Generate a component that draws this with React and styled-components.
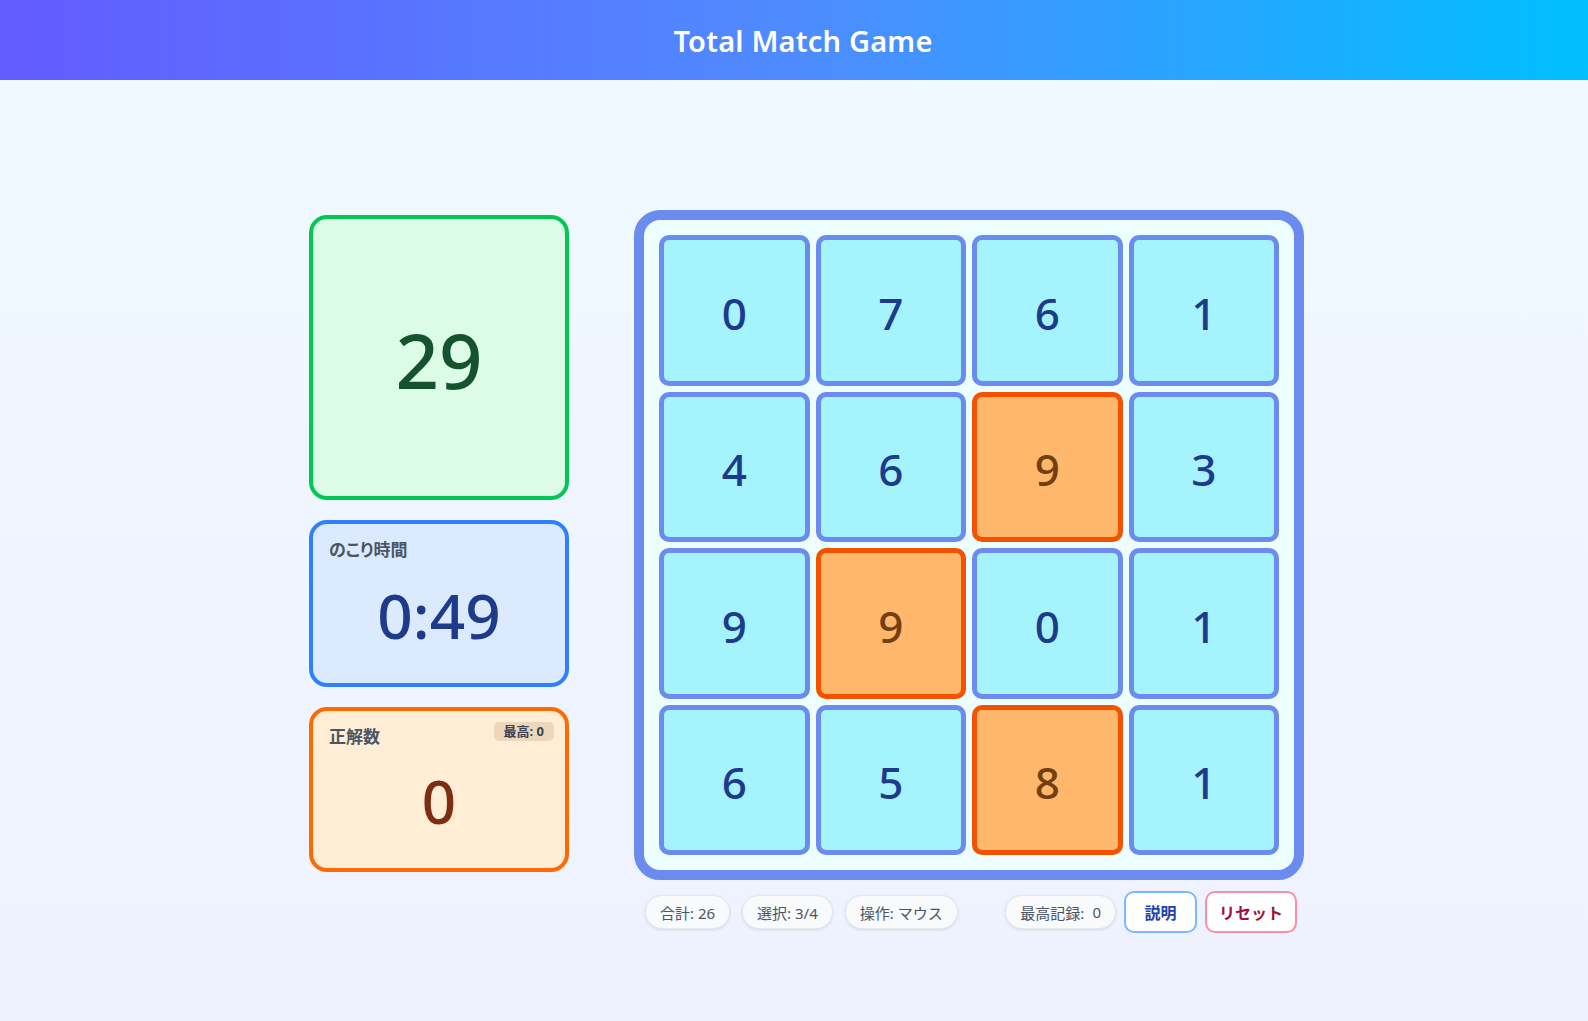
import React from 'react'
import styled, { createGlobalStyle, css } from 'styled-components'

const GlobalStyle = createGlobalStyle`
  * { box-sizing: border-box; }
  body {
    margin: 0;
    font-family: "Noto Sans", "Noto Sans CJK JP", sans-serif;
    color: #1f2937;
  }
`

const Page = styled.div`
  min-height: 100vh;
  background: linear-gradient(180deg, #f0f9ff 0%, #eef2ff 100%);
`

const Header = styled.header`
  height: 80px;
  display: flex;
  align-items: center;
  justify-content: center;
  padding-left: 18px;
  background: linear-gradient(90deg, #635bff 0%, #4f8bff 50%, #00bfff 100%);
`

const Title = styled.h1`
  margin: 0;
  font-size: 29px;
  font-weight: 600;
  color: #ffffff;
  letter-spacing: 0.2px;
`

const Main = styled.main`
  display: flex;
  justify-content: center;
  padding-top: 130px;
`

const Layout = styled.div`
  width: 1020px;
  display: grid;
  grid-template-columns: 1fr 670px;
  column-gap: 65px;
  row-gap: 11px;
`

const SidePanel = styled.div`
  grid-column: 1;
  grid-row: 1;
  justify-self: end;
  align-self: start;
  margin-top: 5px;
  width: 260px;
  display: flex;
  flex-direction: column;
  gap: 20px;
`

const tones = {
  green: { border: '#00c853', bg: '#dcfce7', text: '#14532d' },
  blue: { border: '#2f80ff', bg: '#dbeafe', text: '#1e3a8a' },
  orange: { border: '#ff6a00', bg: '#ffedd5', text: '#7c2d12' }
}

const StatCard = styled.div`
  position: relative;
  height: ${p => p.$height}px;
  border: 4px solid ${p => tones[p.$tone].border};
  background: ${p => tones[p.$tone].bg};
  border-radius: 18px;
  padding: 14px 16px 16px;
  display: flex;
  flex-direction: column;
`

const CardLabel = styled.div`
  font-size: 17px;
  font-weight: 700;
  line-height: 24px;
  color: #4b5563;
  font-feature-settings: "palt";
`

const CardValue = styled.div`
  flex: 1;
  display: flex;
  align-items: center;
  justify-content: center;
  padding-top: ${p => p.$shift || 0}px;
  font-size: ${p => p.$size}px;
  font-weight: ${p => p.$weight || 500};
  line-height: 1;
  color: ${p => tones[p.$tone].text};
`

const Badge = styled.span`
  position: absolute;
  top: 11px;
  right: 11px;
  height: 19px;
  padding: 0 10px;
  border-radius: 5px;
  background: rgba(140, 90, 40, 0.15);
  font-size: 13px;
  font-weight: 700;
  line-height: 19px;
  color: #374151;
`

const Board = styled.div`
  grid-column: 2;
  grid-row: 1;
  border: 10px solid #6b8cee;
  border-radius: 26px;
  background: #ecfeff;
  padding: 15px;
  display: grid;
  grid-template-columns: repeat(4, 1fr);
  gap: 6px;
`

const Tile = styled.div`
  aspect-ratio: 1;
  border-radius: 10px;
  border: 5px solid #6b8cee;
  background: #a5f3fc;
  display: flex;
  align-items: center;
  justify-content: center;
  padding-top: 5px;
  font-size: 44px;
  font-weight: 500;
  color: #1e3a8a;
  ${p => p.$selected && css`
    border-color: #f45200;
    background: #ffb86b;
    color: #713f12;
  `}
`

const InfoBar = styled.div`
  grid-column: 2;
  grid-row: 2;
  display: flex;
  align-items: center;
  justify-content: space-between;
  padding: 0 7px 0 11px;
`

const Group = styled.div`
  display: flex;
  align-items: center;
  gap: ${p => p.$gap}px;
`

const Chip = styled.span`
  height: 34px;
  display: inline-flex;
  align-items: center;
  padding: 0 14px;
  border-radius: 17px;
  background: #f8fafc;
  border: 1px solid #e5e7eb;
  box-shadow: 0 1px 3px rgba(15, 23, 42, 0.12);
  font-size: 15px;
  color: #4b5563;
  white-space: nowrap;
`

const ChipValue = styled.span`
  margin-left: 8px;
`

const buttonTones = {
  blue: { border: '#7ab8ff', text: '#1e40af' },
  red: { border: '#fb8ea3', text: '#9f1239' }
}

const Button = styled.button`
  height: 42px;
  min-width: 73px;
  padding: 0 12px;
  border-radius: 10px;
  border: 2px solid ${p => buttonTones[p.$tone].border};
  background: #ffffff;
  color: ${p => buttonTones[p.$tone].text};
  font-family: inherit;
  font-size: 16px;
  font-weight: 700;
  cursor: pointer;
`

const tiles = [0, 7, 6, 1, 4, 6, 9, 3, 9, 9, 0, 1, 6, 5, 8, 1]
const selected = [6, 9, 14]

export default function App () {
  return (
    <Page>
      <GlobalStyle />
      <Header>
        <Title>Total Match Game</Title>
      </Header>
      <Main>
        <Layout>
          <SidePanel>
            <StatCard $tone='green' $height={285}>
              <CardValue $tone='green' $size={76} $shift={7}>29</CardValue>
            </StatCard>
            <StatCard $tone='blue' $height={167}>
              <CardLabel>のこり時間</CardLabel>
              <CardValue $tone='blue' $size={62}>0:49</CardValue>
            </StatCard>
            <StatCard $tone='orange' $height={165}>
              <CardLabel>正解数</CardLabel>
              <Badge>最高: 0</Badge>
              <CardValue $tone='orange' $size={60}>0</CardValue>
            </StatCard>
          </SidePanel>
          <Board>
            {tiles.map((n, i) => (
              <Tile key={i} $selected={selected.includes(i)}>{n}</Tile>
            ))}
          </Board>
          <InfoBar>
            <Group $gap={12}>
              <Chip>合計: 26</Chip>
              <Chip>選択: 3/4</Chip>
              <Chip>操作: マウス</Chip>
            </Group>
            <Group $gap={8}>
              <Chip>最高記録:<ChipValue>0</ChipValue></Chip>
              <Button $tone='blue'>説明</Button>
              <Button $tone='red'>リセット</Button>
            </Group>
          </InfoBar>
        </Layout>
      </Main>
    </Page>
  )
}
